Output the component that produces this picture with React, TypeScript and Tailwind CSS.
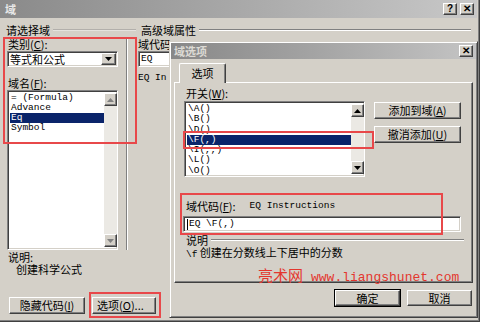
import React from "react";

const raised =
  "border border-t-white border-l-white border-b-[#404040] border-r-[#404040] shadow-[inset_-1px_-1px_0_#808080,inset_1px_1px_0_#d4d0c8]";
const sunken =
  "border border-t-[#808080] border-l-[#808080] border-b-white border-r-white shadow-[inset_1px_1px_0_#404040,inset_-1px_-1px_0_#d4d0c8]";
const mono = "font-['Liberation_Mono','DejaVu_Sans_Mono',monospace]";

function Arrow({ up, gray }: { up?: boolean; gray?: boolean }) {
  return (
    <svg width="7" height="4" viewBox="0 0 7 4">
      <path d={up ? "M3.5 0 L7 4 L0 4 Z" : "M0 0 L7 0 L3.5 4 Z"} fill={gray ? "#808080" : "#000"} />
    </svg>
  );
}

function ScrollBar({ gray }: { gray?: boolean }) {
  return (
    <div className="flex flex-col w-[13px] h-full bg-[#ebe9e4]">
      <div className={`${raised} h-[13px] bg-[#d4d0c8] flex items-center justify-center`}>
        <Arrow up gray={gray} />
      </div>
      <div className="flex-1" />
      <div className={`${raised} h-[13px] bg-[#d4d0c8] flex items-center justify-center`}>
        <Arrow gray={gray} />
      </div>
    </div>
  );
}

function TitleBtn({ children }: { children: React.ReactNode }) {
  return (
    <div className={`${raised} w-[14px] h-[12px] bg-[#d4d0c8] flex items-center justify-center text-[10px] font-bold leading-none font-['Liberation_Sans',sans-serif]`}>
      {children}
    </div>
  );
}

function Btn({ children, className = "", def }: { children: React.ReactNode; className?: string; def?: boolean }) {
  return (
    <div className={`${def ? "outline outline-1 outline-black" : ""} ${className}`}>
      <div className={`${raised} h-full bg-[#d4d0c8] flex items-center justify-center leading-none`}>{children}</div>
    </div>
  );
}

function Etched({ className = "" }: { className?: string }) {
  return <div className={`h-[2px] border-t border-t-[#808080] border-b border-b-white ${className}`} />;
}

export default function App() {
  const leftItems = ["= (Formula)", "Advance", "Eq", "Symbol"];
  const switches = ["\\A()", "\\B()", "\\D()", "\\F(,)", "\\I(,,)", "\\L()", "\\O()"];

  return (
    <div className="relative w-[480px] h-[322px] overflow-hidden bg-[#d4d0c8] text-[11px] text-black font-['Noto_Sans_CJK_SC',sans-serif]">
      {/* outer window */}
      <div className="flex flex-col h-full w-[480px] border-r border-b border-r-[#404040] border-b-[#404040] shadow-[inset_-1px_-1px_0_#808080]">
        <div className="h-[18px] mr-[2px] bg-linear-to-r from-[#8a8a8a] to-[#c8c8c8] flex items-center pl-[5px] pr-[3px]">
          <span className="text-[#e8e8e8] font-bold text-[11px] leading-none">域</span>
          <div className="ml-auto flex gap-[3px]">
            <TitleBtn>?</TitleBtn>
            <TitleBtn>✕</TitleBtn>
          </div>
        </div>

        <div className="flex flex-col flex-1 pl-[6px] pr-[8px]">
          {/* group headers */}
          <div className="flex items-center mt-[6px] h-[12px]">
            <span className="leading-none">请选择域</span>
            <Etched className="ml-[3px] w-[83px] opacity-40" />
            <span className="ml-[5px] leading-none">高级域属性</span>
            <Etched className="ml-[3px] flex-1" />
          </div>

          <div className="flex flex-1">
            {/* left column */}
            <div className="flex flex-col w-[120px]">
              <div className="mt-[2px] pl-[2px] leading-[12px]">
                类别(<u>C</u>):
              </div>
              <div className={`${sunken} mt-[1px] ml-[1px] w-[111px] h-[16px] bg-white flex items-center pl-[2px]`}>
                <span className="leading-none">等式和公式</span>
                <div className={`${raised} ml-auto mr-[1px] w-[15px] h-[12px] bg-[#d4d0c8] flex items-center justify-center`}>
                  <Arrow />
                </div>
              </div>
              <div className="mt-[10px] pl-[2px] leading-[12px]">
                域名(<u>F</u>):
              </div>
              <div className={`${sunken} mt-[1px] ml-[1px] w-[111px] h-[160px] bg-white flex pl-[2px] py-[2px]`}>
                <div className={`flex-1 flex flex-col ${mono} text-[9.5px]`}>
                  {leftItems.map((t) => (
                    <div key={t} className={`h-[10px] leading-[10px] pl-[1px] whitespace-pre ${t === "Eq" ? "bg-[#0a246a] text-white" : ""}`}>
                      {t}
                    </div>
                  ))}
                </div>
                <ScrollBar gray />
              </div>
              <div className="mt-[1px] pl-[2px] leading-[12px]">说明:</div>
              <div className="pl-[10px] leading-[13px]">创建科学公式</div>
            </div>

            {/* separator */}
            <div className="w-[2px] mt-[2px] h-[212px] border-l border-l-[#808080] border-r border-r-white" />

            {/* middle (mostly hidden) */}
            <div className="flex flex-col pl-[10px]">
              <div className="mt-[2px] leading-[12px]">域代码</div>
              <div className={`${sunken} mt-[1px] w-[40px] h-[16px] bg-white flex items-center pl-[2px] ${mono} text-[9.5px]`}>EQ</div>
              <div className={`mt-[6px] ${mono} text-[9.5px] leading-[10px]`}>EQ In</div>
            </div>
          </div>

          {/* bottom buttons */}
          <div className="flex gap-[7px] h-[17px] mb-[7px] pl-[3px]">
            <Btn className="w-[76px]">
              隐藏代码(<u>I</u>)
            </Btn>
            <Btn className="w-[64px]">
              <span className="mr-auto pl-[4px]">
                选项(<u>O</u>)...
              </span>
            </Btn>
          </div>
        </div>
      </div>

      {/* inner dialog (window on top) */}
      <div className="absolute left-[169px] top-[41px] w-[309px] h-[277px] bg-[#d4d0c8] border border-t-[#d4d0c8] border-l-[#d4d0c8] border-b-[#404040] border-r-[#404040] shadow-[inset_1px_1px_0_white,inset_-1px_-1px_0_#808080] p-[1px] flex flex-col">
        <div className="h-[16px] bg-linear-to-r from-[#888888] to-[#c4c4c4] flex items-center pl-[3px] pr-[3px]">
          <span className="text-[#dcdad4] font-bold leading-none">域选项</span>
          <div className="ml-auto">
            <TitleBtn>✕</TitleBtn>
          </div>
        </div>

        <div className="flex flex-col px-[3px] pt-[4px]">
          <div className="h-[19px] flex items-end pl-[5px]">
            <div className="relative z-10 w-[47px] h-[20px] -mb-[1px] bg-[#d4d0c8] border-t border-l border-t-white border-l-white border-r border-r-[#404040] rounded-t-[2px] shadow-[inset_-1px_0_0_#808080] flex items-center justify-center">
              选项
            </div>
          </div>
          <div className="relative h-[201px] border border-t-white border-l-white border-b-[#404040] border-r-[#404040] shadow-[inset_-1px_-1px_0_#808080] pl-[9px] pt-[4px]">
            <div className="pl-[2px] leading-[12px]">
              开关(<u>W</u>):
            </div>
            <div className="flex mt-[2px]">
              <div className={`${sunken} w-[181px] h-[76px] bg-white flex pl-[2px] py-[2px]`}>
                <div className={`flex-1 flex flex-col ${mono} text-[9.5px]`}>
                  {switches.map((t) => (
                    <div key={t} className={`h-[10.3px] leading-[10.3px] pl-[1px] whitespace-pre ${t === "\\F(,)" ? "bg-[#0a246a] text-white" : ""}`}>
                      {t}
                    </div>
                  ))}
                </div>
                <ScrollBar />
              </div>
              <div className="flex flex-col gap-[7px] ml-[9px] mt-[1px]">
                <Btn className="w-[87px] h-[17px]">
                  添加到域(<u>A</u>)
                </Btn>
                <Btn className="w-[87px] h-[17px]">
                  撤消添加(<u>U</u>)
                </Btn>
              </div>
            </div>

            <div className="flex items-center mt-[23px] pl-[2px] leading-[12px]">
              <span>
                域代码(<u>F</u>):
              </span>
              <span className={`ml-[14px] ${mono} text-[9.5px]`}>EQ Instructions</span>
            </div>
            <div className={`${sunken} mt-[4px] -ml-[1px] w-[278px] h-[16px] bg-white flex items-center pl-[3px] ${mono} text-[9.5px]`}>
              <span className="w-[1px] h-[11px] bg-black mr-[1px]" />
              EQ \F(,)
            </div>
            <div className="flex items-center mt-[2px] pl-[2px]">
              <span className="leading-[12px]">说明</span>
              <Etched className="ml-[3px] flex-1 mr-[8px]" />
            </div>
            <div className="pl-[2px] leading-[13px]">
              <span className={`${mono} text-[9.5px]`}>\f</span> 创建在分数线上下居中的分数
            </div>

            {/* watermark */}
            <div className="absolute left-[83px] top-[184px] flex items-baseline text-[#e3362e] leading-none whitespace-nowrap">
              <span className="text-[15px] font-['Noto_Sans_CJK_SC',sans-serif]">亮术网</span>
              <span className="ml-[8px] text-[13px] font-['Liberation_Mono',monospace]">www.liangshunet.com</span>
            </div>
          </div>

          <div className="flex justify-end gap-[7px] mt-[7px] pr-[1px]">
            <Btn def className="w-[65px] h-[16px]">
              确定
            </Btn>
            <Btn className="w-[65px] h-[16px]">取消</Btn>
          </div>
        </div>
      </div>

      {/* red annotation frames */}
      <div className="absolute left-[3px] top-[37px] w-[134px] h-[107px] border-2 border-[#e8484a]" />
      <div className="absolute left-[183px] top-[131px] w-[191px] h-[18px] border-2 border-[#e8484a]" />
      <div className="absolute left-[180px] top-[193px] w-[263px] h-[42px] border-2 border-[#e8484a]" />
      <div className="absolute left-[89px] top-[292px] w-[72px] h-[26px] border-2 border-[#e8484a]" />
    </div>
  );
}
